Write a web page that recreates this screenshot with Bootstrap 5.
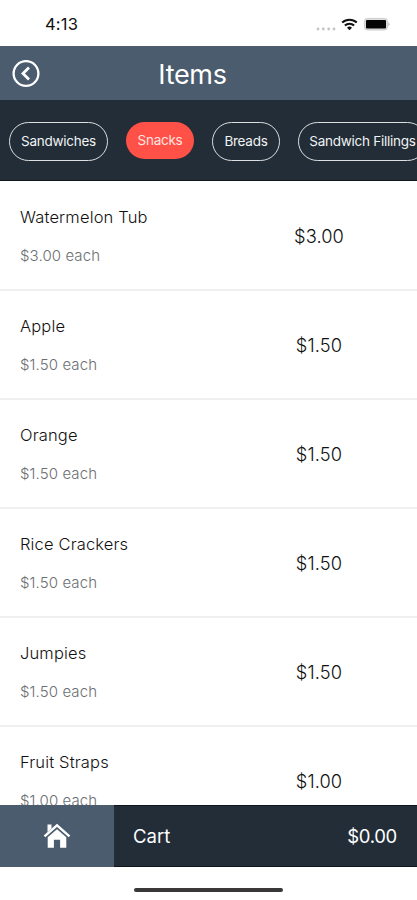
<!DOCTYPE html>
<html lang="en">
<head>
<meta charset="utf-8">
<meta name="viewport" content="width=device-width, initial-scale=1">
<title>Items</title>
<link href="https://cdn.jsdelivr.net/npm/bootstrap@5.3.0/dist/css/bootstrap.min.css" rel="stylesheet">
<style>
  body { font-family: Inter, "Liberation Sans", sans-serif; color: #222; line-height: 1.2; }
  .screen { height: 900px; }
  .status { height: 46px; padding: 3px 27px 0 45px; }
  .clock { font-size: 16.5px; font-weight: 400; color: #111; letter-spacing: .2px; }
  .topbar { height: 54px; background: #4a5c6d; padding: 2px 44px 0 12px; }
  .topbar h1 { font-size: 27px; font-weight: 400; letter-spacing: -.3px; padding-top: 2px; }
  .side { width: 28px; }
  .cats { height: 81px; background: #222d37; padding: 2px 0 0 9px; gap: 18px; border-bottom: 1px solid #11161b; }
  .pill { height: 39px; border: 1.5px solid #dcdedf; border-radius: 20px; font-size: 13.5px; letter-spacing: -.25px; color: #f1f2f3; width: 99px; }
  .pill.on { height: 37px; background: #ff5148; border: 0; width: 68px; margin-top: -2px; color: #ffe4e0; }
  .pill.short { width: 68px; }
  .pill.wide { width: 129px; }
  .item { height: 109px; padding: 0 0 0 20px; border-bottom: 2px solid #efefef; }
  .list { padding-top: 1px; }
  .name { font-size: 16.5px; line-height: 20px; margin-top: 25px; font-weight: 300; letter-spacing: .15px; color: #111; }
  .each { font-size: 15px; line-height: 18px; margin-top: 20px; font-weight: 300; letter-spacing: .1px; color: #6c6f72; }
  .cost { width: 50px; margin-right: 73px; font-size: 18.3px; padding-top: 2px; font-weight: 300; color: #111; letter-spacing: .1px; }
  .cartbar { height: 62px; }
  .home { width: 114px; background: #4a5c6d; }
  .cart { background: #222d37; padding: 1px 20px 0 19px; font-size: 18.5px; border-top: 1px solid #10151c; border-bottom: 1px solid #10151c; }
  .cart span:last-child { letter-spacing: -.3px; }
  .foot { height: 33px; padding-top: 21px; }
  .bar { width: 149px; height: 4px; background: #393737; }
</style>
</head>
<body class="bg-white">
<div class="screen d-flex flex-column overflow-hidden">
  <div class="status d-flex align-items-center justify-content-between flex-shrink-0">
    <span class="clock">4:13</span>
    <svg width="75" height="16" viewBox="0 0 75 16">
      <g fill="#c4c4c4"><circle cx="3" cy="12" r="1.4"/><circle cx="8.3" cy="12" r="1.4"/><circle cx="13.7" cy="12" r="1.4"/><circle cx="19" cy="12" r="1.4"/></g>
      <g fill="none" stroke="#111" stroke-width="2.1"><path d="M27.2 5.6a10.6 10.6 0 0 1 14.6 0"/><path d="M29.9 8.6a6.6 6.6 0 0 1 9.2 0"/></g>
      <path d="M32 10.7a3.7 3.7 0 0 1 5 0L34.5 13.2z" fill="#111"/>
      <rect x="49.4" y="1.4" width="23" height="11.6" rx="3" fill="#ddd" stroke="#ccc"/>
      <rect x="51" y="3" width="20" height="8.6" rx="1" fill="#050505"/>
      <path d="M73.5 5q2 2.2 0 4.4z" fill="#aaa"/>
    </svg>
  </div>
  <header class="topbar d-flex align-items-center justify-content-between flex-shrink-0 text-white">
    <svg class="side" height="28" viewBox="0 0 28 28" fill="none" stroke="#fff"><circle cx="14" cy="13.5" r="12.4" stroke-width="2.3"/><path d="M17 7.6l-6 5.9 6 5.9" stroke-width="2.8"/></svg>
    <h1 class="m-0">Items</h1>
    <span class="side"></span>
  </header>
  <nav class="cats d-flex align-items-center flex-shrink-0 text-nowrap">
    <span class="pill d-flex align-items-center justify-content-center flex-shrink-0">Sandwiches</span>
    <span class="pill on d-flex align-items-center justify-content-center flex-shrink-0">Snacks</span>
    <span class="pill short d-flex align-items-center justify-content-center flex-shrink-0">Breads</span>
    <span class="pill wide d-flex align-items-center justify-content-center flex-shrink-0">Sandwich Fillings</span>
  </nav>
  <main class="list flex-grow-1 overflow-hidden">
    <div class="item d-flex justify-content-between"><div><div class="name">Watermelon Tub</div><div class="each">$3.00 each</div></div><div class="cost align-self-center text-center">$3.00</div></div>
    <div class="item d-flex justify-content-between"><div><div class="name">Apple</div><div class="each">$1.50 each</div></div><div class="cost align-self-center text-center">$1.50</div></div>
    <div class="item d-flex justify-content-between"><div><div class="name">Orange</div><div class="each">$1.50 each</div></div><div class="cost align-self-center text-center">$1.50</div></div>
    <div class="item d-flex justify-content-between"><div><div class="name">Rice Crackers</div><div class="each">$1.50 each</div></div><div class="cost align-self-center text-center">$1.50</div></div>
    <div class="item d-flex justify-content-between"><div><div class="name">Jumpies</div><div class="each">$1.50 each</div></div><div class="cost align-self-center text-center">$1.50</div></div>
    <div class="item d-flex justify-content-between"><div><div class="name">Fruit Straps</div><div class="each">$1.00 each</div></div><div class="cost align-self-center text-center">$1.00</div></div>
  </main>
  <div class="cartbar d-flex flex-shrink-0 text-white">
    <div class="home d-flex align-items-center justify-content-center">
      <svg width="28" height="26" viewBox="0 0 28 26"><path d="M4.5 1.5h4v4l-4 3.6z" fill="#fff"/><path d="M1.5 13.3L14 2.4l12.5 10.9" fill="none" stroke="#fff" stroke-width="2.4"/><path d="M14 6.3l9.3 8v10.5h-6.2v-8h-6.2v8H4.7V14.3z" fill="#fff"/></svg>
    </div>
    <div class="cart flex-grow-1 d-flex align-items-center justify-content-between"><span>Cart</span><span>$0.00</span></div>
  </div>
  <div class="foot flex-shrink-0"><div class="bar rounded-pill mx-auto"></div></div>
</div>
<script src="https://cdn.jsdelivr.net/npm/bootstrap@5.3.0/dist/js/bootstrap.bundle.min.js"></script>
</body>
</html>
